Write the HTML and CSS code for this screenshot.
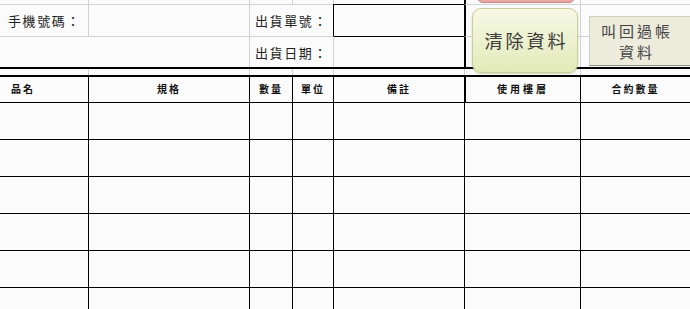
FILE: index.html
```html
<!DOCTYPE html>
<html lang="zh-Hant">

<head>
    <meta charset="UTF-8">
    <meta name="viewport" content="width=device-width, initial-scale=1.0">
    <title>出貨單</title>
    <link rel="stylesheet" href="styles.css">
</head>

<body>
    <div class="sheet">
        <!-- 上方表頭 -->
        <div class="row r0">
            <div class="c"></div>
            <div class="c"></div>
            <div class="c"></div>
            <div class="c"></div>
            <div class="c"></div>
            <div class="c"></div>
            <div class="c"></div>
        </div>
        <div class="row r1">
            <div class="c label">手機號碼：</div>
            <div class="c"></div>
            <div class="c label span2">出貨單號：</div>
            <div class="c box"></div>
            <div class="c thick"></div>
            <div class="c"></div>
        </div>
        <div class="row r2">
            <div class="c span2"></div>
            <div class="c label span2">出貨日期：</div>
            <div class="c boxend"></div>
            <div class="c thick"></div>
            <div class="c"></div>
        </div>

        <!-- 雙線 -->
        <div class="line"></div>
        <div class="row gap">
            <div class="c"></div>
            <div class="c"></div>
            <div class="c"></div>
            <div class="c"></div>
            <div class="c"></div>
            <div class="c"></div>
            <div class="c"></div>
        </div>
        <div class="line"></div>

        <!-- 欄位名稱 -->
        <div class="row head">
            <div class="c first">品名</div>
            <div class="c">規格</div>
            <div class="c">數量</div>
            <div class="c">單位</div>
            <div class="c">備註</div>
            <div class="c thick wide">使用樓層</div>
            <div class="c">合約數量</div>
        </div>

        <!-- 明細 -->
        <div class="row item"><div class="c"></div><div class="c"></div><div class="c"></div><div class="c"></div><div class="c"></div><div class="c"></div><div class="c"></div></div>
        <div class="row item"><div class="c"></div><div class="c"></div><div class="c"></div><div class="c"></div><div class="c"></div><div class="c"></div><div class="c"></div></div>
        <div class="row item"><div class="c"></div><div class="c"></div><div class="c"></div><div class="c"></div><div class="c"></div><div class="c"></div><div class="c"></div></div>
        <div class="row item"><div class="c"></div><div class="c"></div><div class="c"></div><div class="c"></div><div class="c"></div><div class="c"></div><div class="c"></div></div>
        <div class="row item"><div class="c"></div><div class="c"></div><div class="c"></div><div class="c"></div><div class="c"></div><div class="c"></div><div class="c"></div></div>
        <div class="row item"><div class="c"></div><div class="c"></div><div class="c"></div><div class="c"></div><div class="c"></div><div class="c"></div><div class="c"></div></div>

        <!-- 浮在表格上的按鈕 -->
        <div class="btn-red"></div>
        <div class="btn-clear">清除資料</div>
        <div class="btn-recall">叫回過帳<br>資料</div>
    </div>
</body>

</html>
```

FILE: styles.css
```css
* {
    margin: 0;
    padding: 0;
    box-sizing: border-box;
}

body {
    background: #fbfbfb;
    font-family: "Noto Sans CJK TC", "Noto Sans CJK SC", sans-serif;
    color: #111;
    overflow: hidden;
}

.sheet {
    position: relative;
    width: 690px;
    height: 309px;
}

.row {
    display: grid;
    grid-template-columns: 88px 161px 43px 41px 131px 116px 110px;
}

.c {
    border-left: 1px solid #d2d2d2;
}

.row .c:first-child {
    border-left: none;
}

.span2 {
    grid-column: span 2;
}

/* 上方三列 */
.r0 .c {
    height: 4px;
}

.r1 .c {
    height: 32px;
    border-top: 1px solid #d2d2d2;
}

.r2 .c {
    height: 31px;
    border-top: 1px solid #d2d2d2;
}

.label {
    font-size: 13px;
    letter-spacing: 1.6px;
    line-height: 31px;
    padding-left: 5px;
    color: #222;
}

.r1 .label:first-child {
    padding-left: 8px;
}

.r1 .box {
    border-top: 1px solid #000;
    border-left: 1px solid #000;
}

.r2 .boxend {
    border-top: 1px solid #000;
}

.r0 .c:nth-child(6),
.thick {
    border-left: 2px solid #000;
}

.line {
    height: 2px;
    background: #000;
}

.gap .c {
    height: 6px;
}

/* 欄位名稱 */
.head .c {
    height: 25px;
    border-left: 1px solid #000;
    font-size: 10px;
    font-weight: bold;
    letter-spacing: 2px;
    line-height: 24px;
    text-align: center;
}

.head .c.first {
    text-align: left;
    padding-left: 11px;
}

.head .c.thick {
    border-left: 2px solid #000;
}

.head .c.wide {
    letter-spacing: 3px;
}

.item .c {
    height: 37px;
    border-top: 1px solid #000;
    border-left: 1px solid #000;
}

/* 按鈕 */
.btn-red {
    position: absolute;
    left: 477px;
    top: -10px;
    width: 98px;
    height: 13px;
    background: #e9a8a6;
    border: 1px solid #c98582;
    border-radius: 6px;
}

.btn-clear {
    position: absolute;
    left: 472px;
    top: 8px;
    width: 106px;
    height: 65px;
    border: 1px solid #c7cf98;
    border-radius: 9px;
    background: linear-gradient(#f7f9e6, #e2eab8);
    box-shadow: 0 1px 2px rgba(120, 130, 60, .35);
    font-size: 18px;
    letter-spacing: 3px;
    color: #3a3a3a;
    text-align: center;
    line-height: 63px;
    padding-left: 3px;
}

.btn-recall {
    position: absolute;
    left: 589px;
    top: 16px;
    width: 104px;
    height: 50px;
    background: #ecebdc;
    border: 1px solid #cfcfc0;
    border-right-color: #8f8f80;
    border-bottom-color: #8f8f80;
    font-size: 15px;
    letter-spacing: 3px;
    line-height: 21px;
    color: #444;
    text-align: center;
    padding-top: 3px;
    padding-right: 8px;
}
```
